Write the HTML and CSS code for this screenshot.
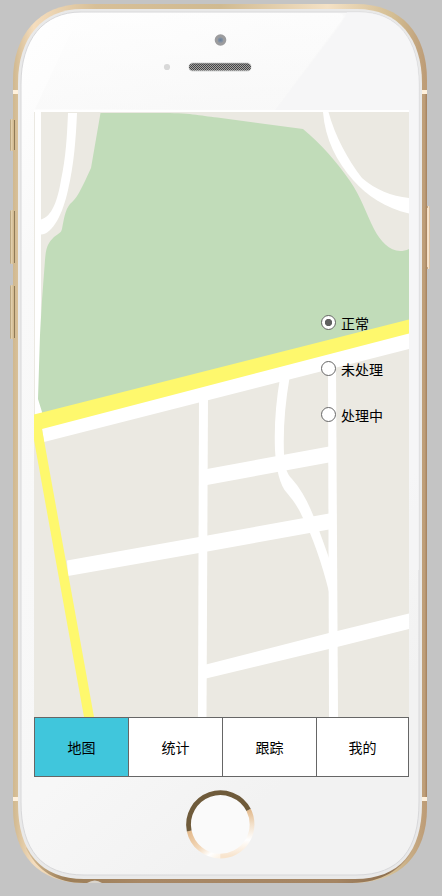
FILE: index.html
```html
<!DOCTYPE html>
<html lang="zh-CN">
<head>
<meta charset="utf-8">
<title>地图</title>
<link rel="stylesheet" href="styles.css">
</head>
<body>
<main class="phone">
  <svg class="shell" viewBox="0 0 442 896" aria-hidden="true">
    <defs>
      <linearGradient id="gold" x1="0" y1="0" x2="1" y2="0">
        <stop offset="0" stop-color="#d0b88f"/><stop offset=".05" stop-color="#f5ddbd"/><stop offset=".2" stop-color="#d7bf97"/><stop offset=".5" stop-color="#d0ba91"/><stop offset=".76" stop-color="#f4e1c5"/><stop offset=".92" stop-color="#d3bd92"/><stop offset="1" stop-color="#bc9b76"/>
      </linearGradient>
      <linearGradient id="bottomGold" x1="0" y1="0" x2="1" y2="0">
        <stop offset="0" stop-color="#d9c09a"/><stop offset=".1" stop-color="#9c7e58"/><stop offset=".3" stop-color="#a88866"/><stop offset=".8" stop-color="#a58563"/><stop offset=".93" stop-color="#8e7050"/><stop offset="1" stop-color="#c8ab86"/>
      </linearGradient>
      <linearGradient id="face" x1="0" y1="0" x2=".4" y2="1">
        <stop offset="0" stop-color="#fff"/><stop offset=".25" stop-color="#f9f9f9"/><stop offset=".8" stop-color="#f7f7f7"/><stop offset="1" stop-color="#f2f2f2"/>
      </linearGradient>
      <linearGradient id="shine" x1="0" y1="0" x2="0" y2="1">
        <stop offset="0" stop-color="#fefefe"/><stop offset="1" stop-color="#f8f8f8"/>
      </linearGradient>
      <linearGradient id="button" x1="0" y1="0" x2="1" y2="0">
        <stop offset="0" stop-color="#a8946f"/><stop offset=".35" stop-color="#ead8b6"/><stop offset=".65" stop-color="#c6ae84"/><stop offset="1" stop-color="#88734f"/>
      </linearGradient>
      <linearGradient id="rightButton" x1="0" y1="0" x2="1" y2="0">
        <stop offset="0" stop-color="#a98763"/><stop offset=".5" stop-color="#c8a985"/><stop offset=".7" stop-color="#f6e3cc"/><stop offset="1" stop-color="#cdb190"/>
      </linearGradient>
      <linearGradient id="ringLow" x1="0" y1="0" x2="1" y2="1">
        <stop offset="0" stop-color="#e3b98b"/><stop offset=".5" stop-color="#f3d9bb"/><stop offset=".8" stop-color="#fff"/><stop offset="1" stop-color="#fdf3e6"/>
      </linearGradient>
      <linearGradient id="ringRight" x1="0" y1="0" x2="0" y2="1">
        <stop offset="0" stop-color="#e2b98c"/><stop offset=".3" stop-color="#f2dfc8"/><stop offset=".65" stop-color="#fff"/><stop offset="1" stop-color="#f8e4cd"/>
      </linearGradient>
      <pattern id="mesh" width="2" height="2" patternUnits="userSpaceOnUse">
        <rect width="2" height="2" fill="#a5a5a5"/><path d="M0 0h1v1H0zM1 1h1v1H1z" fill="#444"/>
      </pattern>
      <clipPath id="faceClip"><path d="M81 12H359C398 12 419 40 419 84V802C419 849 400 875 356 875H84C42 875 21 850 21 802V84C21 40 43 12 81 12Z"/></clipPath>
    </defs>
    <g fill="url(#button)">
      <rect x="10" y="119" width="5" height="32" rx="1.5"/>
      <rect x="10" y="210" width="5" height="54" rx="1.5"/>
      <rect x="10" y="285" width="5" height="54" rx="1.5"/>
    </g>
    <rect x="425" y="206" width="5" height="63" rx="1.5" fill="url(#rightButton)"/>
    <path fill="url(#gold)" d="M83 4H356C402 4 427 34 427 80V808C427 855 400 883 352 883H84C39 883 13 855 13 808V80C13 35 39 4 83 4Z"/>
    <path fill="url(#bottomGold)" d="M26 848C37 871 57 883 84 883H352C381 883 403 869 414 848L400 835 360 870H80L40 835Z"/>
    <path d="M426.300 90V800" fill="none" stroke="#a98763" stroke-width="1.400"/>
    <g fill="none" stroke-width="1">
      <path d="M14.500 120V150M14.500 211V263M14.500 286V338" stroke="#8f7a57"/>
      <path d="M427.500 208V267" stroke="#f4e0c8"/>
    </g>
    <path d="M87 883Q95 878 102 883Z" fill="#d8d3cb"/>
    <path fill="#fff1dd" d="M13 90h5v4h-5zM422 90h5v4h-5zM13 797h5v4h-5zM422 797h5v4h-5z"/>
    <path d="M82 9H357C399 9 422 39 422 83V804C422 851 400 879 355 879H84C41 879 18 852 18 804V83C18 38 42 9 82 9Z" fill="#e9e9e9"/>
    <path d="M81 12H359C398 12 419 40 419 84V802C419 849 400 875 356 875H84C42 875 21 850 21 802V84C21 40 43 12 81 12Z" fill="url(#face)" stroke="#d8d8da" stroke-width="1"/>
    <g clip-path="url(#faceClip)">
      <path d="M347 12Q345 18 340 25L275 110H409V570H430V12Z" fill="#f5f5f6" opacity=".7"/>
      <path d="M80 13H335Q347 13 342 20L275 109H35Z" fill="url(#shine)" opacity=".65"/>
    </g>
    <circle cx="220.500" cy="40" r="5.800" fill="#9c9c9e"/><circle cx="220.500" cy="40" r="2.600" fill="#8190a3"/><circle cx="220.500" cy="40" r="1.200" fill="#6f8299"/>
    <circle cx="167" cy="67" r="3.100" fill="#d8d8d8"/>
    <rect x="188.500" y="62.500" width="63" height="9" rx="4.500" fill="#d2d3d3"/>
    <rect x="189" y="63.500" width="62" height="7" rx="3.500" fill="url(#mesh)"/>
    <path d="M192 64H248" stroke="#555" stroke-opacity=".6"/>
    <circle cx="220.300" cy="824.300" r="31" fill="#fafafa"/>
    <g fill="none" stroke-width="4.800">
      <path d="M189.200 830.900A31.800 31.800 0 0 0 220.300 856.100" stroke="url(#ringLow)"/>
      <path d="M248.600 809.900A31.800 31.800 0 0 1 220.300 856.100" stroke="url(#ringRight)"/>
      <path d="M189.200 830.900A31.800 31.800 0 0 1 248.600 809.900" stroke="#6f5b3b"/>
    </g>
  </svg>

  <section class="screen">
    <div class="map">
      <svg class="streets" viewBox="34 110 375 607" aria-hidden="true">
        <path fill="#ebe9e2" d="M34 110H409V717H34z"/>
        <path fill="#fff" d="M34 110H409V112H34zM35 110H41V300L40 395L44 416L35 418z"/>
        <path fill="#c1dcb9" d="M100.500 113H165C192 113 202 116 221 118L303 129C321 144 337 162 350 181C361 197 366 213 374 229C382 244 394 256 409 249V325L42 417V412L38 399L40 335L42 300L45 260C46 247 48 243 54 237C59 233 61 233 62 229C64 219 65 210 70 204C77 198 79 193 85 181L91 168Z"/>
        <path fill="#fff" d="M68 113H77C76 137 74 165 68 190C63 213 53 234 41 234.500V219.500C52 217 58 199 61 180C66 157 67 136 68 113Z"/>
        <path fill="#fff" d="M323 112H328.500C335 136 348 160 362 178C376 190 391 196 409 198V213.500C386 208 367 196 353 180C337 162 325 139 323 112Z"/>
        <path fill="#fff" d="M42 428L409 332V349L44 442z"/>
        <g fill="#fff">
          <path d="M199 395H208L206.500 717H198z"/>
          <path d="M328 365H336L338 717H329z"/>
          <path d="M207 469L329 446.500V462.500L207 485z"/>
          <path d="M67 560.500L199 537L329 513.500V529.500L199 553L68 576z"/>
          <path d="M206 664.500L329 633L409 613.500V629L329 649L206 678.500z"/>
          <path d="M280 378H289.500C285 404 283 430 284 454C284 466 287 474 292 479C309 498 317 525 329 558V592C322 564 313 537 302 516C297 505 292 499 287 493C280 486 276 469 275 450C274 425 276 402 280 378Z"/>
        </g>
        <path fill="#fef86d" d="M34 414.500L409 319.500V333.500L42 429L94 717H84L34 440z"/>
      </svg>
      <div class="filters" role="radiogroup">
        <label class="filter"><input class="radio" type="radio" name="status" checked><span>正常</span></label>
        <label class="filter"><input class="radio" type="radio" name="status"><span>未处理</span></label>
        <label class="filter"><input class="radio" type="radio" name="status"><span>处理中</span></label>
      </div>
    </div>
    <nav class="tabs">
      <a class="tab active">地图</a>
      <a class="tab">统计</a>
      <a class="tab">跟踪</a>
      <a class="tab">我的</a>
    </nav>
  </section>
</main>
</body>
</html>
```

FILE: styles.css
```css
* { box-sizing: border-box; }
body {
  margin: 0;
  background: #c4c4c4;
  color: #000;
  font: 14px/20px "Noto Sans CJK SC", sans-serif;
}
.phone {
  position: relative;
  width: 442px;
  height: 896px;
  padding: 110px 33px 119px 34px;
  overflow: hidden;
}
.shell {
  position: absolute;
  inset: 0;
  width: 442px;
  height: 896px;
}
.screen { position: relative; width: 375px; }
.map { position: relative; height: 607px; }
.streets { display: block; width: 375px; height: 607px; }
.filters {
  position: absolute;
  top: 202px;
  left: 287px;
  display: grid;
  gap: 26px;
}
.filter {
  display: flex;
  align-items: center;
  gap: 5px;
  height: 20px;
  white-space: nowrap;
}
.filter span { padding-top: 2px; }
.radio {
  appearance: none;
  flex: none;
  width: 15px;
  height: 15px;
  margin: 0;
  border: 1px solid #666;
  border-radius: 50%;
  background: #fff;
}
.radio:checked { background: radial-gradient(circle, #606060 0 3.3px, #fff 4px); }
.tabs {
  display: grid;
  grid-template-columns: 94px 94px 94px 92px;
  height: 60px;
  border: 1px solid #666;
  border-right: 0;
  background: #fff;
}
.tab {
  display: flex;
  align-items: center;
  justify-content: center;
  border-right: 1px solid #666;
}
.tab.active { background: #40c6dc; }
```
